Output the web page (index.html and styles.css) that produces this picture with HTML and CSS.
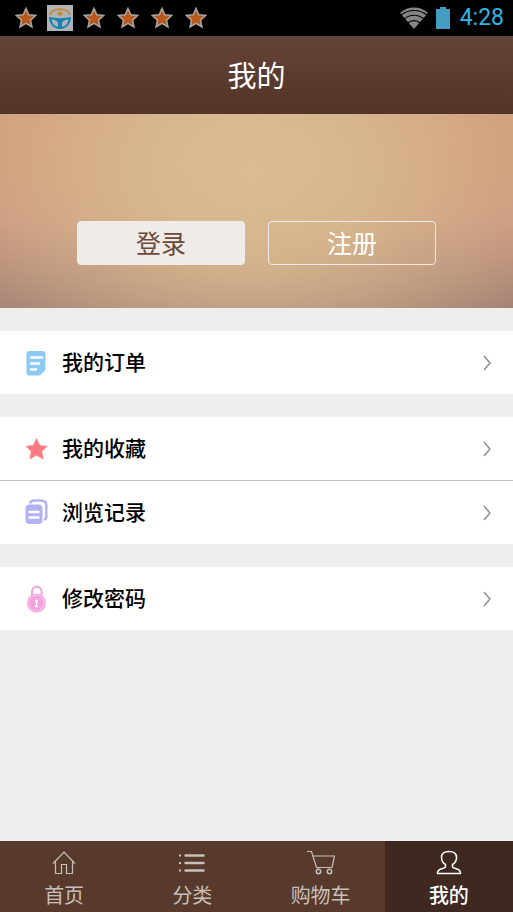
FILE: index.html
```html
<!DOCTYPE html>
<html lang="zh-CN">
<head>
<meta charset="utf-8">
<meta name="viewport" content="width=device-width, initial-scale=1">
<title>我的</title>
<link rel="stylesheet" href="styles.css">
</head>
<body>
<svg class="defs" aria-hidden="true">
  <symbol id="star" viewBox="0 0 22 22">
    <path d="M11 1.500l2.800 6.300 6.700.7-5 4.600 1.400 6.700-5.900-3.400-5.900 3.400 1.400-6.700-5-4.600 6.700-.7z" fill="#b9581b" stroke="#aaa49e" stroke-width="1.600"/>
  </symbol>
  <symbol id="chevron" viewBox="0 0 10 18">
    <path d="M2 2l6 7-6 7" fill="none" stroke="#929292" stroke-width="1.600"/>
  </symbol>
</svg>
<div class="status">
  <div class="notices">
    <svg class="star"><use href="#star"/></svg>
    <svg class="app" viewBox="0 0 26 26">
      <rect width="26" height="26" fill="#b0b3b5"/>
      <path d="M3 10a10.500 8.500 0 0 1 20 0" fill="none" stroke="#c58a3c" stroke-width="1.800"/>
      <path d="M13 5.500l3.200 3-3.200 3-3.200-3z" fill="#c58a3c"/>
      <path d="M2 12c3 0 6 1.300 11 1.300S21 12 24 12c0 7-4.800 12-11 12S2 19 2 12z" fill="#1681b4"/>
      <path d="M4.500 14.500c3 .3 5 1 6 2.200.8 1.500.6 3.300.5 5.300C7.500 21.200 5 18.500 4.500 14.500zM21.500 14.500c-3 .3-5 1-6 2.200-.8 1.500-.6 3.300-.5 5.300 3.500-.8 6-3.500 6.500-7.500z" fill="#b0b3b5"/>
    </svg>
    <svg class="star"><use href="#star"/></svg>
    <svg class="star"><use href="#star"/></svg>
    <svg class="star"><use href="#star"/></svg>
    <svg class="star"><use href="#star"/></svg>
  </div>
  <div class="system">
    <svg class="wifi" viewBox="0 0 28 22">
      <path d="M0 6C8-1.300 20-1.300 28 6L14 22z" fill="#858585"/>
      <path d="M1 8C9 2 19 2 27 8M4 12C10 7 18 7 24 12M7.500 16c4-3 9-3 13 0" fill="none" stroke="#000" stroke-width="1.200"/>
    </svg>
    <svg class="battery" viewBox="0 0 14 22"><path d="M4 0h6v2h4v20H0V2h4z" fill="#439dc3"/></svg>
    <time class="clock">4:28</time>
  </div>
</div>
<header class="header"><h1>我的</h1></header>
<main class="main">
  <section class="hero">
    <button class="btn btn-login" type="button">登录</button>
    <button class="btn btn-register" type="button">注册</button>
  </section>
  <nav class="groups" aria-label="账户">
    <div class="group">
      <a class="row" href="#orders">
        <svg class="icon" viewBox="0 0 24 28">
          <path d="M5.500 2h13a3 3 0 0 1 3 3v16l-5.500 5.500H5.500a3 3 0 0 1-3-3V5a3 3 0 0 1 3-3z" fill="#8ccaf3"/>
          <path d="M7 8.500h11M7 14.500h8M7 20.500h5" stroke="#fff" stroke-width="2.600" stroke-linecap="round"/>
        </svg>
        <span>我的订单</span><svg class="chevron"><use href="#chevron"/></svg>
      </a>
    </div>
    <div class="group">
      <a class="row" href="#favorites">
        <svg class="icon" viewBox="0 0 24 28">
          <path d="M12.500 3.500l3.300 7 7.200.8-5.200 5.200 1.400 7.500-6.700-3.700L5.800 24l1.400-7.500L2 11.300l7.200-.8z" fill="#fb7c80" stroke="#fb7c80" stroke-width=".6" stroke-linejoin="round"/>
        </svg>
        <span>我的收藏</span><svg class="chevron"><use href="#chevron"/></svg>
      </a>
      <a class="row" href="#history">
        <svg class="icon" viewBox="0 0 24 28">
          <path d="M6 4.500C6.500 2.500 8 1.500 10 1.500h7c3.300 0 5.300 2 5.300 5v11c0 1.700-.8 2.800-2.300 3.200" fill="none" stroke="#b0b2f3" stroke-width="2.400"/>
          <rect x="1.500" y="5.500" width="17" height="19.500" rx="4" fill="#b0b2f3"/>
          <path d="M5.500 13h9M5.500 18.500h9" stroke="#fff" stroke-width="2.400" stroke-linecap="round"/>
        </svg>
        <span>浏览记录</span><svg class="chevron"><use href="#chevron"/></svg>
      </a>
    </div>
    <div class="group">
      <a class="row" href="#password">
        <svg class="icon" viewBox="0 0 24 28">
          <path d="M8 12V6.500a4.800 4.800 0 0 1 9.600 0V12" fill="none" stroke="#f5a1df" stroke-width="2"/>
          <circle cx="12.500" cy="18" r="9.500" fill="#f5a1df"/>
          <circle cx="12.500" cy="18" r="8" fill="none" stroke="#fbd8f1" stroke-width=".8"/>
          <circle cx="12.500" cy="16" r="1.600" fill="#fff"/>
          <path d="M12.500 16v5.500M10.800 21.500h3.400" fill="none" stroke="#fff" stroke-width="1.500"/>
        </svg>
        <span>修改密码</span><svg class="chevron"><use href="#chevron"/></svg>
      </a>
    </div>
  </nav>
</main>
<nav class="tabs" aria-label="主导航">
  <a class="tab" href="#home">
    <svg viewBox="0 0 28 26"><path d="M3 13.500L14 2l11 11.500M5.500 11.500V23.500h6v-9h5v9h6V11.500" fill="none" stroke="currentColor" stroke-width="1.200"/></svg>
    <span>首页</span>
  </a>
  <a class="tab" href="#category">
    <svg viewBox="0 0 28 26"><path d="M7.500 5.500h18M7.500 13h18M7.500 20.500h18" stroke="currentColor" stroke-width="2.400" stroke-linecap="round"/><path d="M1 5.500h2M1 13h2M1 20.500h2" stroke="currentColor" stroke-width="2"/></svg>
    <span>分类</span>
  </a>
  <a class="tab" href="#cart">
    <svg viewBox="0 0 28 26"><path d="M0 1.500h4.500l5 16H25L27.500 6H6" fill="none" stroke="currentColor" stroke-width="1.200"/><circle cx="11.500" cy="21.500" r="2.200" fill="none" stroke="currentColor" stroke-width="1.500"/><circle cx="22.500" cy="21.500" r="2.200" fill="none" stroke="currentColor" stroke-width="1.500"/></svg>
    <span>购物车</span>
  </a>
  <a class="tab tab-active" href="#mine" aria-current="page">
    <svg viewBox="0 0 28 26"><path d="M10.500 14.500C8 13 6.500 10 6.500 7.500 6.500 3.500 9.500 1.500 14 1.500s7.500 2 7.500 6c0 2.500-1.500 5.500-4 7v2c0 1.500 2 1.800 4.500 2.500 2.500.8 3.500 2.500 3.500 4.500h-23c0-2 1-3.700 3.500-4.500 2.500-.7 4.500-1 4.500-2.500z" fill="none" stroke="currentColor" stroke-width="1.500" stroke-linejoin="round"/></svg>
    <span>我的</span>
  </a>
</nav>
</body>
</html>
```
FILE: styles.css
```css
* {
  box-sizing: border-box;
}

body {
  margin: 0;
  min-height: 100vh;
  display: flex;
  flex-direction: column;
  background: #efeeed;
  color: #000;
  font-family: Roboto, "Noto Sans CJK SC", sans-serif;
}

a {
  color: inherit;
  text-decoration: none;
}

svg {
  display: block;
  flex: none;
}

.defs {
  position: absolute;
  width: 0;
  height: 0;
}

.status {
  display: flex;
  justify-content: space-between;
  height: 36px;
  padding: 0 9px;
  background: #000;
}

.notices {
  display: flex;
  align-items: center;
  gap: 12px;
  padding-left: 6px;
}

.star {
  width: 22px;
  height: 22px;
}

.app {
  width: 26px;
  height: 26px;
  margin: 0 -2px;
}

.system {
  display: flex;
  align-items: center;
  gap: 8px;
}

.wifi {
  width: 28px;
  height: 22px;
}

.battery {
  width: 14px;
  height: 22px;
}

.clock {
  padding-left: 2px;
  color: #33b5e5;
  font-size: 23px;
  line-height: 36px;
}

.header {
  display: flex;
  align-items: center;
  justify-content: center;
  height: 78px;
  padding-top: 3px;
  background: linear-gradient(#634335, #523528);
}

.header h1 {
  margin: 0;
  color: #fff;
  font-size: 29px;
  font-weight: 400;
  line-height: 40px;
}

.main {
  flex: 1;
}

.hero {
  display: flex;
  align-items: flex-end;
  gap: 23px;
  height: 194px;
  padding: 0 15% 43px;
  background:
    radial-gradient(ellipse 62% 120% at 49% 30%, #d9bc90 0%, rgba(217, 187, 144, 0.85) 35%, rgba(215, 176, 140, 0) 100%),
    linear-gradient(#d19b7a 15%, #cb9880 55%, #a58376 100%);
}

.btn {
  flex: 1;
  height: 44px;
  padding: 4px 0 0;
  border: 1px solid #efebe8;
  border-radius: 4px;
  font-family: inherit;
  font-size: 25px;
  line-height: 38px;
}

.btn-login {
  background: #efebe8;
  color: #6b4938;
}

.btn-register {
  background: transparent;
  color: #fff;
}

.groups {
  display: flex;
  flex-direction: column;
  gap: 23px;
  padding: 23px 0;
}

.group {
  background: #fff;
}

.row {
  display: flex;
  align-items: center;
  gap: 14px;
  height: 63px;
  padding: 0 21px 0 24px;
  font-size: 21px;
  font-weight: 500;
  line-height: 30px;
}

.row + .row {
  height: 64px;
  border-top: 1px solid #c9bfbf;
}

.icon {
  width: 24px;
  height: 28px;
}

.chevron {
  width: 10px;
  height: 18px;
  margin-left: auto;
}

.tabs {
  display: grid;
  grid-template-columns: repeat(4, 1fr);
  background: #573a2c;
}

.tab {
  display: flex;
  flex-direction: column;
  align-items: center;
  gap: 6px;
  height: 71px;
  padding-top: 9px;
  color: #c9bfba;
  font-size: 20px;
  line-height: 28px;
}

.tab svg {
  width: 28px;
  height: 26px;
}

.tab-active {
  background: #3e281f;
  color: #fff;
  font-weight: 500;
}
```
